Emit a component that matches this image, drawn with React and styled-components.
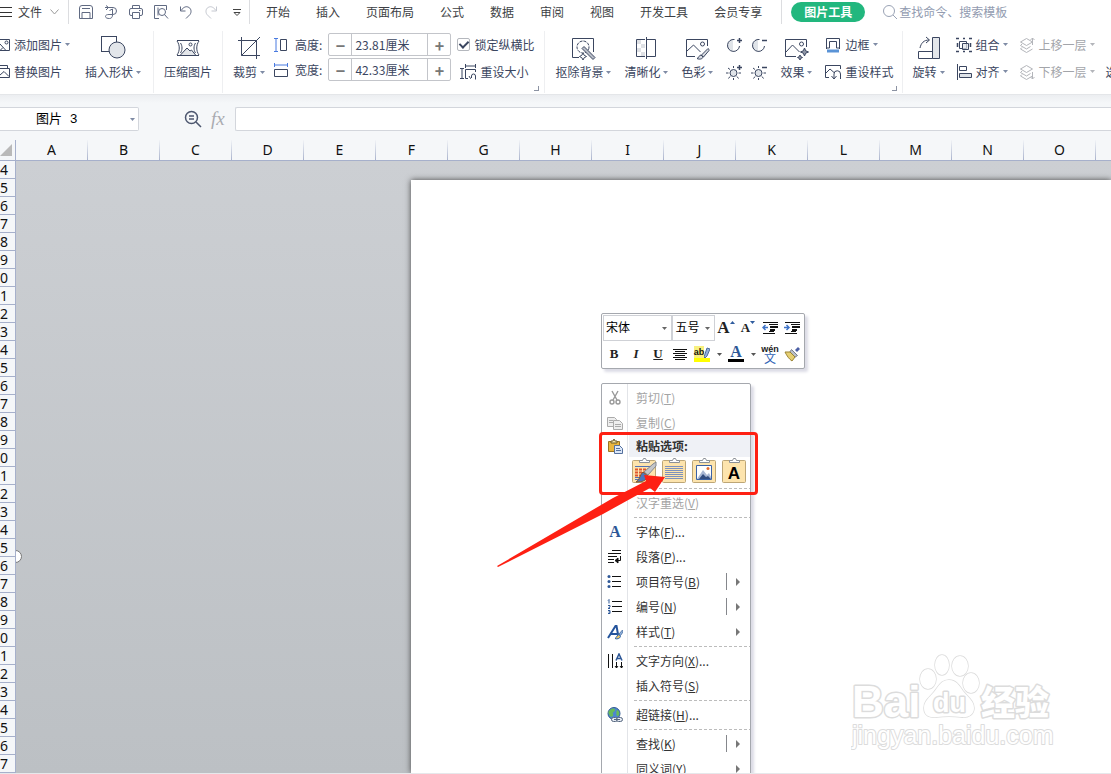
import React from "react";
import styled, { createGlobalStyle } from "styled-components";

const ink = "#3b4660";

const tabs = ["开始", "插入", "页面布局", "公式", "数据", "审阅", "视图", "开发工具", "会员专享"];
const columns = "ABCDEFGHIJKLMNO".split("");
const rows = Array.from({ length: 34 }, (_, i) => i + 24);

/* ---------- icons ---------- */

const Icon = ({ size = 16, w, h, color = ink, sw = 1, children }) => (
  <svg
    width={w || size}
    height={h || size}
    viewBox={`0 0 ${w || size} ${h || size}`}
    fill="none"
    stroke={color}
    strokeWidth={sw}
    aria-hidden="true"
  >
    {children}
  </svg>
);

const Caret = ({ color = "#7f8ba5" }) => (
  <svg width="5" height="3" viewBox="0 0 5 3" fill={color} aria-hidden="true">
    <path d="M0 0h5L2.500 3z" />
  </svg>
);

const LinesIcon = () => (
  <Icon w={12} h={12} color="#333"><path d="M0 1.500h12M0 6.500h12M0 10.500h12" /></Icon>
);
const ChevronIcon = () => (
  <Icon w={9} h={6} color="#9a9a9a"><path d="M.5.5l4 4.500 4-4.500" /></Icon>
);

const quick = [
  {
    name: "保存",
    icon: <Icon color="#606a82"><path d="M1.500 4a2.500 2.500 0 0 1 2.500-2.500h8A2.500 2.500 0 0 1 14.500 4v10.500h-13zM4 14V8.500h8V14M4 4.500h8" /></Icon>,
  },
  {
    name: "输出为PDF",
    icon: <Icon color="#606a82"><path d="M2 3.500h8a3.500 3.500 0 0 1 0 7H8M3 1.500l2.500 2L3 6M6.500 6.500l3-1.500v6c0 2-1 3.500-3 3.500s-4-.5-4-2 1.500-2 3.500-2h2.500" /></Icon>,
  },
  {
    name: "打印",
    icon: <Icon color="#606a82"><path d="M4.500 4.500v-3h7v3M4 11.500H3A1.500 1.500 0 0 1 1.500 10V6A1.500 1.500 0 0 1 3 4.500h10A1.500 1.500 0 0 1 14.500 6v4a1.500 1.500 0 0 1-1.500 1.500h-1M4.500 8.500h7v6h-7zM11 6.500h1.500" /></Icon>,
  },
  {
    name: "打印预览",
    icon: <Icon color="#606a82"><path d="M6 14.500H1.500v-13h12V6" /><circle cx="9" cy="8" r="3.500" /><path d="M5 3.500v8M11.500 10.500l3.500 4" /></Icon>,
  },
  {
    name: "撤销",
    icon: <Icon color="#606a82"><path d="M2.500 2.500v4.500h5M3 6.500c3-4 5.500-4.500 8-3s2.500 5 1 7L8 14.500" /></Icon>,
  },
  {
    name: "恢复",
    icon: <Icon color="#c5c8d0"><path d="M13.500 2.500v4.500h-5M13 6.500c-3-4-5.500-4.500-8-3s-2.500 5-1 7L8 14.500" /></Icon>,
  },
  {
    name: "自定义",
    icon: <Icon color="#444"><path d="M5 5.500h8M6 8.500l3 3 3-3z" /></Icon>,
  },
];

const AddPictureIcon = () => (
  <Icon w={10} h={14}><path d="M0 1.500h9.500v11H0M0 12.500l3-3M0 6l6 6.500" /><circle cx="6.500" cy="4.500" r="1.500" /></Icon>
);
const SwapPictureIcon = () => (
  <Icon w={10} h={15}><path d="M0 1.500h7.500V4M0 4.500h9.500v9H0M0 11l4-3.500 5 5" /></Icon>
);
const ShapesIcon = () => (
  <Icon size={26}><rect x="1.500" y="1.500" width="15" height="15" fill="#fff" /><circle cx="17" cy="15" r="8" fill="#e3e6ea" /></Icon>
);
const CompressIcon = () => (
  <Icon size={26}>
    <path d="M2 5.500h22M2 20.500h22M2 6c3 4 3 10 0 14M24 6c-3 4-3 10 0 14M5.500 8c2 3 2 7 0 10M20.500 8c-2 3-2 7 0 10" />
    <path d="M5 20.500l7-7.500 3 3 1.500-1 4.500 5.500z" fill="#e3e6ea" /><circle cx="15.500" cy="9.500" r="1.500" />
  </Icon>
);
const CropIcon = () => (
  <Icon size={26}><path d="M5.500 2v18.500H24M2 5.500h18.500V24M5.500 20.500L24 2" /></Icon>
);
const HeightIcon = () => (
  <Icon><path d="M1 1.500h4M1 14.500h4M3 1.500v13" stroke="#4a7be0" /><path d="M7.500 2.500h6v11h-6z" /></Icon>
);
const WidthIcon = () => (
  <Icon><path d="M1.500 1v4M14.500 1v4M1.500 3h13" stroke="#4a7be0" /><path d="M1.500 7.500h13v7h-13z" /></Icon>
);
const ResetSizeIcon = () => (
  <Icon><path d="M0 4.500h4M0 14.500h4M2 4.500v10M5.500 0v4M15.500 0v4M5.500 2h10M8 14.500H5.500v-9h10V8M9 12l1.500 2.500L12 13M11.500 13.500V12a2 2 0 0 1 4 0v3.500" /></Icon>
);
const CutoutIcon = () => (
  <Icon size={26}>
    <path d="M9 22.500H2.500v-19h21V17" /><circle cx="13" cy="12" r="6" strokeDasharray="3 1" />
    <path d="M12 13.500l2-2L25 22.500l-2 2z" fill="#b9bec8" /><path d="M13 18l1.200 2.300 2.300 1.200-2.300 1.200L13 25l-1.200-2.300-2.300-1.200 2.300-1.200z" fill="#fff" />
  </Icon>
);
const ClarityIcon = () => (
  <Icon size={26}>
    <path d="M12 4.500H3.500v17H12M14 4.500h8.500v17H14" /><path d="M13.500 2v22" />
    <path d="M4 5h4v4H4zM8 9h4v4H8zM4 13h4v4H4zM8 17h4v4H8z" fill="#dfe1e5" stroke="none" />
  </Icon>
);
const ColorIcon = () => (
  <Icon size={26}>
    <path d="M11 21.500H2.500v-17h21V11M3 16l6.500-6 7 7" /><circle cx="18.500" cy="9" r="2" />
    <path d="M24 13.500L17.500 20l2 2L25 15.500c0-1-.5-2-1-2zM17 20c-2 0-2 3-4 3.500 3 1.500 6 0 6-1.500z" fill="#d9dce2" />
  </Icon>
);
const EffectIcon = () => (
  <Icon size={26}>
    <path d="M13 21.500H2.500v-17h21V12M3 17l6.500-7 7 7" /><circle cx="18.500" cy="9" r="2" />
    <path d="M21.500 13l1.200 2.800 2.800 1.200-2.800 1.200-1.200 2.800-1.200-2.800-2.800-1.200 2.800-1.200zM17 20l.8 1.700 1.700.8-1.700.8L17 25l-.8-1.700-1.700-.8 1.700-.8z" fill="#8f96a6" />
  </Icon>
);
const RotateIcon = () => (
  <Icon size={26}>
    <path d="M2.500 16.500h14v7h-14zM4 13c1-5 4-8 9-8M10 2l3.500 3L10 8" /><path d="M16.500 2.500h7v21h-7z" fill="#e3e6ea" />
  </Icon>
);
const ContrastIcon = ({ plus }) => (
  <Icon>
    <path d="M7 2.500a6 6 0 0 0 0 12z" fill="#dfe3e8" stroke="none" />
    <path d="M8.500 2.500A6 6 0 1 0 13.500 9" /><path d={plus ? "M11 3.500h5M13.500 1v5" : "M11 3.500h5"} strokeWidth="1.500" />
  </Icon>
);
const SunIcon = ({ plus }) => (
  <Icon>
    <circle cx="7.500" cy="9" r="3.500" fill="#dfe3e8" />
    <path d="M7.500 2v2M7.500 14v2M0 9h2.500M12.500 9H15M2 4l2 1.500M2.500 14.500L4 12.500M12.500 14.500L11 12.500" />
    <path d={plus ? "M11 3.500h5M13.500 1v5" : "M11 3.500h5"} strokeWidth="1.500" />
  </Icon>
);
const BorderIcon = () => (
  <Icon><path d="M1.500 12V1.500h13V12M4.500 11V4.500h7V11M1.500 11h3M11.500 11h3" /><path d="M2 14h12" stroke="#5a93d6" strokeWidth="3" /></Icon>
);
const ResetStyleIcon = () => (
  <Icon><path d="M4 13.500H.5v-12h15V5M1 9l4-4 4 3.500M6.500 12L9 15l2.500-3M9 15v-5a3 3 0 0 1 6.500 0v5" /></Icon>
);
const GroupIcon = () => (
  <Icon><path d="M3.500 4.500h7v7h-7z" /><path d="M6.500 6.500h6v6h-6z" fill="#dfe3e8" fillOpacity=".7" /><path d="M0 1.500h3M13 1.500h3M0 14.500h3M13 14.500h3M7 1.500h2M7 14.500h2M1.500 6v4M14.500 6v4" strokeWidth="1.500" /></Icon>
);
const AlignIcon = () => (
  <Icon><path d="M1.500 0v16" /><path d="M3.500 2.500h7v4h-7z" /><path d="M3.500 9.500h12v4h-12z" fill="#dfe3e8" /></Icon>
);
const LayerIcon = ({ up }) => (
  <Icon color="#b3b5ba">
    <path d="M7.500 1.500l6 3.500-6 3.500L1.500 5zM3 7l-1.500 1.500 6 3.500 4-2.500M3 10.500L1.500 12l6 3.500 6-3.500" />
    {up ? <path d="M13.500 8V1M11.500 3l2-2 2 2" /> : <path d="M13.500 8v7M11.500 13l2 2 2-2" />}
  </Icon>
);

/* ---------- ribbon pieces ---------- */

const Big = ({ icon, label, caret }) => (
  <BigButton>
    {icon}
    <Caption>{label}{caret && <Caret />}</Caption>
  </BigButton>
);

const Small = ({ icon, label, caret, muted }) => (
  <SmallButton $muted={muted} disabled={muted}>
    {icon}
    <Caption>{label}{caret && <Caret color={muted ? "#b3b5ba" : undefined} />}</Caption>
  </SmallButton>
);

const SizeField = ({ id, value }) => (
  <Spinner>
    <StepButton aria-label="减少">−</StepButton>
    <SpinnerInput id={id} defaultValue={value} />
    <StepButton aria-label="增加">+</StepButton>
  </Spinner>
);

const Ribbon = () => (
  <RibbonBar>
    <Group $gap={15} $left={0} $right={12}>
      <Stack>
        <Small icon={<AddPictureIcon />} label="添加图片" caret />
        <Small icon={<SwapPictureIcon />} label="替换图片" />
      </Stack>
      <Big icon={<ShapesIcon />} label="插入形状" caret />
    </Group>
    <Group><Big icon={<CompressIcon />} label="压缩图片" /></Group>
    <Group $gap={6}>
      <Big icon={<CropIcon />} label="裁剪" caret />
      <Fields>
        <FieldLabel htmlFor="pic-height"><HeightIcon />高度:</FieldLabel>
        <SizeField id="pic-height" value="23.81厘米" />
        <FieldLabel htmlFor="pic-width"><WidthIcon />宽度:</FieldLabel>
        <SizeField id="pic-width" value="42.33厘米" />
      </Fields>
      <Stack>
        <CheckLabel><CheckBox type="checkbox" defaultChecked />锁定纵横比</CheckLabel>
        <Indent><Small icon={<ResetSizeIcon />} label="重设大小" /></Indent>
      </Stack>
      <Launcher />
    </Group>
    <Group $gap={13} $right={8}>
      <Big icon={<CutoutIcon />} label="抠除背景" caret />
      <Big icon={<ClarityIcon />} label="清晰化" caret />
      <Big icon={<ColorIcon />} label="色彩" caret />
      <Tuning>
        <SmallButton aria-label="增加对比度"><ContrastIcon plus /></SmallButton>
        <SmallButton aria-label="降低对比度"><ContrastIcon /></SmallButton>
        <SmallButton aria-label="增加亮度"><SunIcon plus /></SmallButton>
        <SmallButton aria-label="降低亮度"><SunIcon /></SmallButton>
      </Tuning>
      <Big icon={<EffectIcon />} label="效果" caret />
      <Stack>
        <Small icon={<BorderIcon />} label="边框" caret />
        <Small icon={<ResetStyleIcon />} label="重设样式" />
      </Stack>
      <Launcher />
    </Group>
    <Group $gap={11} $last>
      <Big icon={<RotateIcon />} label="旋转" caret />
      <Stack>
        <Small icon={<GroupIcon />} label="组合" caret />
        <Small icon={<AlignIcon />} label="对齐" caret />
      </Stack>
      <Stack>
        <Small icon={<LayerIcon up />} label="上移一层" caret muted />
        <Small icon={<LayerIcon />} label="下移一层" caret muted />
      </Stack>
      <Stack $end><Small label="选择" /></Stack>
    </Group>
  </RibbonBar>
);

/* ---------- floating format toolbar ---------- */

const DentIcon = ({ left }) => (
  <Icon color="#111">
    <path d="M1 2.500h15M1 13.500h12M7 4.500h9M7 11.500h5" />
    <path d="M8 7h8M8 10h5" strokeWidth="2" />
    <path d={left ? "M6 7.500H1M3.500 5L1 7.500 3.500 10" : "M0 7.500h5M2.500 5L5 7.500 2.500 10"} stroke="#3f74c8" strokeWidth="1.500" />
  </Icon>
);

const FormatBar = () => (
  <Floating>
    <FormatRow>
      <Combo $w={70}>
        <ComboSelect aria-label="字体"><option>宋体</option></ComboSelect>
        <ComboArrow><Caret color="#666" /></ComboArrow>
      </Combo>
      <Combo $w={43}>
        <ComboSelect aria-label="字号"><option>五号</option></ComboSelect>
        <ComboArrow><Caret color="#666" /></ComboArrow>
      </Combo>
      <Tool aria-label="增大字号">
        <Glyph $size={17}>A</Glyph><Icon w={5} h={14} color="none"><path d="M0 3h5L2.500 0z" fill="#2f5c9e" /></Icon>
      </Tool>
      <Tool aria-label="减小字号">
        <Glyph $size={13}>A</Glyph><Icon w={5} h={14} color="none"><path d="M0 0h5L2.500 3z" fill="#2f5c9e" /></Icon>
      </Tool>
      <Tool aria-label="减少缩进"><DentIcon left /></Tool>
      <Tool aria-label="增加缩进"><DentIcon /></Tool>
    </FormatRow>
    <FormatRow>
      <Tool aria-label="加粗"><Glyph $size={13}>B</Glyph></Tool>
      <Tool aria-label="倾斜"><Glyph $size={13} $italic>I</Glyph></Tool>
      <Tool aria-label="下划线"><Glyph $size={13} $underline>U</Glyph></Tool>
      <Tool aria-label="居中"><Icon color="#111"><path d="M1 3.500h14M3 5.500h10M1 7.500h14M3 9.500h10M1 11.500h14M3 13.500h10" /></Icon></Tool>
      <Tool aria-label="突出显示">
        <Marker>
          <span>ab</span>
          <Icon w={6} h={11}><path d="M0 10l3-9 3 1-3 7-2 2z" fill="#8fb0de" stroke="#4e6d9c" /></Icon>
        </Marker>
      </Tool>
      <DropTool aria-label="突出显示颜色"><Caret color="#555" /></DropTool>
      <Tool aria-label="字体颜色"><FontColor>A</FontColor></Tool>
      <DropTool aria-label="更多颜色"><Caret color="#555" /></DropTool>
      <Tool aria-label="拼音指南"><Pinyin><span>wén</span><span>文</span></Pinyin></Tool>
      <Tool aria-label="格式刷">
        <Icon color="none">
          <path d="M11 4l3-3 2 2-3 3z" fill="#4b5fa5" /><path d="M7.500 3.500l6 6-3 2-5-5z" fill="#b9bec8" stroke="#7a7f8c" />
          <path d="M1 6l5 0 5 5-3 4C5 13 3 10 1 6z" fill="#e6cf73" stroke="#9b8433" />
        </Icon>
      </Tool>
    </FormatRow>
  </Floating>
);

/* ---------- context menu ---------- */

const CutIcon = () => (
  <Icon color="#999" sw={1.4}><path d="M5 1l5 9M11 1L6 10" /><circle cx="5" cy="12" r="2" /><circle cx="11" cy="12" r="2" /></Icon>
);
const CopyIcon = () => (
  <Icon color="#aaa"><path d="M.5 2.500h7l2 2v7h-9z" fill="#eee" /><path d="M6.500 5.500h6l3 3v6h-9z" fill="#eee" /><path d="M2 5.500h4M2 7.500h4M8 9.500h6M8 11.500h6" /></Icon>
);
const PasteIcon = () => (
  <Icon color="none">
    <path d="M1.500 3.500h11v10h-11z" fill="#e9b63f" stroke="#9b7422" /><path d="M4 5V3h2l1-2 1 2h2v2z" fill="#f6e7a8" stroke="#6d5a27" />
    <path d="M7.500 7.500h5l3 3v5h-8z" fill="#dce7f8" stroke="#55719e" /><path d="M9 10.500h4M9 12.500h5" stroke="#55719e" />
  </Icon>
);
const ParagraphIcon = () => (
  <Icon color="#111"><path d="M5 1.500h9M1 4.500h13M1 7.500h9M1 10.500h6M1 13.500h6M13.500 7v4.500H10" /><path d="M8 11.500l3-2.500v5z" fill="#111" /></Icon>
);
const BulletIcon = () => (
  <Icon color="#111"><path d="M5 2.500h9M5 7.500h9M5 12.500h9" /><g fill="#2d5797" stroke="none"><circle cx="2" cy="2.500" r="1.500" /><circle cx="2" cy="7.500" r="1.500" /><circle cx="2" cy="12.500" r="1.500" /></g></Icon>
);
const NumberIcon = () => (
  <Icon color="#111">
    <path d="M5 2.500h10M5 7.500h10M5 12.500h10" />
    <path d="M1 1.500l1-1v4M1 6.500h2v1.500l-2 1.500h2M1 11.500h2v3H1M1.500 13h1.500" stroke="#2d5797" />
  </Icon>
);
const StyleIcon = () => (
  <Icon color="none">
    <path d="M1 14L8.500 2h1l2 11M4 10h6" stroke="#24549c" strokeWidth="2" />
    <path d="M15.500 6L12 10l1.500 1.500L16 8z" fill="#8fb1dc" stroke="#5d7fae" /><path d="M12 10.500c-2 0-2 3-4 4 2 1 5 0 5.500-2z" fill="#e8c468" stroke="#2d66b0" />
  </Icon>
);
const DirectionIcon = () => (
  <Icon color="#111"><path d="M1.500 1v14M5.500 1v14M9.500 9v6M14.500 9v6M8 13l1.500 2 1.500-2M13 13l1.500 2 1.500-2" /><path d="M9 7.500L12 1l3 6.500M10 5.500h4" stroke="#2d5797" strokeWidth="1.500" /></Icon>
);
const LinkIcon = () => (
  <Icon color="none">
    <circle cx="7" cy="6.500" r="6" fill="#4d86cf" stroke="#315a94" /><path d="M3 3c2-2 5-2 5 0s-3 2-2 4-2 4-3 2-3-4 0-6zM10 3c3 1 3 5 1 6s-2-4-1-6z" fill="#68bb58" />
    <rect x="4.500" y="10.500" width="6" height="4" rx="2" stroke="#55667f" fill="#e6ebf3" /><rect x="9.500" y="10.500" width="6" height="4" rx="2" stroke="#55667f" fill="#e6ebf3" /><path d="M7 12.500h6" stroke="#55667f" />
  </Icon>
);

const Clipboard = ({ children }) => (
  <Icon w={26} h={28} color="none">
    <rect x="1.500" y="3.500" width="23" height="22" rx="1" fill="#fde4ad" stroke="#bda676" />
    <path d="M8.500 5.500v-2h3l1-2h2l1 2h3v2z" fill="#fff" stroke="#8b9097" />
    {children}
  </Icon>
);

const pasteChoices = [
  {
    name: "保留源格式",
    art: (
      <>
        <path d="M4 9.500h18M4 20.500h17M4 22.500h10" stroke="#5272b5" /><path d="M4 12.500h16M4 15.500h14M4 18.500h12" stroke="#e0552b" strokeWidth="2" strokeDasharray="3 1" />
        <path d="M25 5v4l-8 9-4-3L22 7z" fill="#c4c6c9" stroke="#85888e" /><path d="M12 15l5 4c-2 5-6 6-12 6 4-2 4-8 7-10z" fill="#4b77bd" stroke="#85592c" />
      </>
    ),
  },
  { name: "匹配目标格式", art: <path d="M4 9.500h18M4 11.500h18M4 13.500h18M4 15.500h18M4 17.500h18M4 19.500h18M4 21.500h18" stroke="#7d92be" /> },
  {
    name: "图片",
    art: (
      <>
        <path d="M5.500 8.500h15v14h-15z" fill="#fff" stroke="#3b62a5" /><path d="M6 22l6-9 4 5 2-2 2 4v2z" fill="#a9b8d4" /><path d="M8 22l4-5 3 3 2-1 3 3z" fill="#324d80" /><circle cx="17" cy="11.500" r="1.500" fill="#e56a2c" />
      </>
    ),
  },
  { name: "只保留文本" },
];

const menuItems = [
  { text: "汉字重选", key: "V", disabled: true },
  "-",
  { text: "字体", key: "F", more: true, glyph: true },
  { text: "段落", key: "P", more: true, icon: <ParagraphIcon /> },
  { text: "项目符号", key: "B", icon: <BulletIcon />, split: true, sub: true },
  { text: "编号", key: "N", icon: <NumberIcon />, split: true, sub: true },
  { text: "样式", key: "T", icon: <StyleIcon />, sub: true },
  "-",
  { text: "文字方向", key: "X", more: true, icon: <DirectionIcon /> },
  { text: "插入符号", key: "S" },
  "-",
  { text: "超链接", key: "H", more: true, icon: <LinkIcon /> },
  "-",
  { text: "查找", key: "K", split: true, sub: true },
  { text: "同义词", key: "Y", sub: true },
];

const Item = ({ item }) => (
  <MenuItem role="menuitem" disabled={item.disabled}>
    <Gutter>{item.glyph ? <Glyph $size={16} $blue>A</Glyph> : item.icon}</Gutter>
    <ItemText>{item.text}(<u>{item.key}</u>){item.more && "..."}</ItemText>
    {item.split && <SplitLine />}
    {item.sub && (
      <Icon w={4} h={8} color="none"><path d="M0 0v8l4-4z" fill="#777" /></Icon>
    )}
  </MenuItem>
);

const ContextMenu = () => (
  <MenuPanel role="menu">
    <Item item={{ text: "剪切", key: "T", disabled: true, icon: <CutIcon /> }} />
    <Item item={{ text: "复制", key: "C", disabled: true, icon: <CopyIcon /> }} />
    <PasteTitle><Gutter><PasteIcon /></Gutter><span>粘贴选项:</span></PasteTitle>
    <PasteRow>
      {pasteChoices.map(({ name, art }) => (
        <PasteButton key={name} aria-label={name}>
          <Clipboard>
            {art || <text x="13" y="22" textAnchor="middle" fontFamily="Liberation Sans" fontWeight="bold" fontSize="17" fill="#000">A</text>}
          </Clipboard>
        </PasteButton>
      ))}
    </PasteRow>
    <Separator />
    {menuItems.map((item, i) => (item === "-" ? <Separator key={i} /> : <Item key={item.text} item={item} />))}
  </MenuPanel>
);

const Watermark = () => (
  <WatermarkSvg width="206" height="100" viewBox="0 0 206 100" aria-hidden="true">
    <g fill="#fff" stroke="#dcdcdc" strokeWidth="3" paintOrder="stroke" strokeLinejoin="round" fontFamily="Liberation Sans, sans-serif">
      <text x="1" y="64" fontSize="44" fontWeight="bold">Bai</text>
      <g strokeWidth="1.500">
        <ellipse cx="77" cy="26" rx="8" ry="10" />
        <ellipse cx="91" cy="12" rx="7" ry="10" />
        <ellipse cx="109" cy="13" rx="8" ry="10" />
        <ellipse cx="120" cy="30" rx="8" ry="10" />
        <path d="M98 27c-8 0-10 6-15 12s-10 9-10 16c0 8 6 10 13 9 8-1 16-1 24 0 8 1 13-3 13-9 0-7-6-11-11-17-4-6-7-11-14-11z" />
      </g>
      <text x="82" y="59" fontSize="27" fontWeight="bold">du</text>
      <text x="130" y="62" fontSize="34" fontWeight="900" fontFamily="Noto Sans CJK SC, sans-serif">经验</text>
      <text x="1" y="91" fontSize="25" strokeWidth="2">jingyan.baidu.com</text>
    </g>
  </WatermarkSvg>
);

const App = () => {
  return (
    <Shell>
      <GlobalStyle />
      <MenuBar>
        <FileButton><LinesIcon />文件<ChevronIcon /></FileButton>
        <QuickTools>
          {quick.map(({ name, icon }) => <QuickButton key={name} aria-label={name}>{icon}</QuickButton>)}
        </QuickTools>
        <Tabs>
          {tabs.map((tab) => <Tab key={tab}>{tab}</Tab>)}
        </Tabs>
        <ActiveTab>图片工具</ActiveTab>
        <Search>
          <Icon color="#9aa3b5"><circle cx="7" cy="7" r="5.500" /><path d="M11 11l4 4" /></Icon>
          <SearchInput aria-label="搜索" placeholder="查找命令、搜索模板" />
        </Search>
      </MenuBar>

      <Ribbon />

      <FormulaRow>
        <NameBox>
          <NameInput aria-label="名称框" defaultValue="图片 3" />
          <NameArrow aria-label="名称列表"><Caret /></NameArrow>
        </NameBox>
        <FormulaTools>
          <Icon w={18} h={18} sw={1.5} color="#4c566e"><circle cx="7.500" cy="7.500" r="6" /><path d="M12 12l5 5M5 6h5M5 9h5" /></Icon>
          <Fx>fx</Fx>
        </FormulaTools>
        <FormulaInput aria-label="编辑栏" />
      </FormulaRow>

      <ColumnHeads>
        <Corner><Icon w={12} h={12} color="none"><path d="M12 0v12H0z" fill="#b9b9b9" /></Icon></Corner>
        {columns.map((name) => <ColumnHead key={name}>{name}</ColumnHead>)}
      </ColumnHeads>

      <Workspace>
        <RowHeads>
          {rows.map((n) => <RowHead key={n}>{n % 10}</RowHead>)}
        </RowHeads>
        <Sheet>
          <Page />
          <ResizeKnob />
          <Watermark />
          <FormatBar />
          <ContextMenu />
          <Highlight />
          <Pointer width="170" height="94" viewBox="0 0 170 94" aria-hidden="true">
            <path d="M0 92L116 24 149 7 147 1 168 3 158 18 153 14 106 40 1 93z" fill="#fe2013" />
          </Pointer>
        </Sheet>
      </Workspace>
      <BottomEdge />
    </Shell>
  );
};

export default App;

const GlobalStyle = createGlobalStyle`
  * {
    box-sizing: border-box;
  }

  body {
    margin: 0;
    overflow: hidden;
    font: 12px/16px "Noto Sans CJK SC", sans-serif;
    color: #3b4660;
  }

  button, input, select {
    margin: 0;
    padding: 0;
    border: 0;
    background: none;
    font: inherit;
    color: inherit;
  }

  svg {
    display: block;
    flex-shrink: 0;
  }
`;

const Shell = styled.div`
  display: flex;
  flex-direction: column;
  height: 100vh;
  background: #f5f7f9;
`;

const MenuBar = styled.header`
  display: flex;
  align-items: center;
  height: 24px;
  background: #fff;
  color: #3d3f45;
  white-space: nowrap;
`;

const FileButton = styled.button`
  display: flex;
  align-items: center;
  gap: 6px;
  width: 69px;
  height: 24px;
  border-right: 1px solid #dcdde0;

  svg:last-child {
    margin-left: 2px;
  }
`;

const QuickTools = styled.div`
  display: flex;
  padding: 0 1px 0 4px;
  border-right: 1px solid #dcdde0;
`;

const QuickButton = styled.button`
  display: flex;
  align-items: center;
  justify-content: center;
  width: 25px;
  height: 24px;
`;

const Tabs = styled.nav`
  display: flex;
  margin: 0 9px 0 3px;
  padding-right: 6px;
  border-right: 1px solid #dcdde0;
`;

const Tab = styled.button`
  flex-shrink: 0;
  height: 24px;
  padding: 0 13px;
`;

const ActiveTab = styled(Tab)`
  height: 20px;
  border-radius: 10px;
  background: #22b77e;
  color: #fff;
  font-weight: bold;
`;

const Search = styled.label`
  display: flex;
  flex: 1;
  align-items: center;
  gap: 1px;
  margin-left: 17px;
  min-width: 0;
`;

const SearchInput = styled.input`
  flex: 1;
  min-width: 0;

  &::placeholder {
    color: #929bb0;
    opacity: 1;
  }
`;

const RibbonBar = styled.section`
  position: relative;
  display: flex;
  height: 71px;
  padding-top: 7px;
  overflow: hidden;
  background: #fff;
  border-bottom: 1px solid #e4e6e9;
  white-space: nowrap;
`;

const Group = styled.div`
  position: relative;
  display: flex;
  flex-shrink: 0;
  gap: ${({ $gap }) => $gap || 0}px;
  height: 62px;
  padding: 0 ${({ $right = 10 }) => $right}px 0 ${({ $left = 10 }) => $left}px;
  border-right: ${({ $last }) => ($last ? 0 : 1)}px solid #eeeff1;
`;

const Stack = styled.div`
  display: flex;
  flex-direction: column;
  justify-content: ${({ $end }) => ($end ? "flex-end" : "flex-start")};
  height: 54px;
`;

const BigButton = styled.button`
  display: flex;
  flex-direction: column;
  align-items: center;
  gap: 3px;
  padding-top: 4px;
`;

const Caption = styled.span`
  display: flex;
  align-items: center;
  gap: 3px;
`;

const SmallButton = styled.button`
  display: flex;
  align-items: center;
  gap: 4px;
  height: 27px;
  color: ${({ $muted }) => ($muted ? "#a3a5aa" : "inherit")};
`;

const Tuning = styled.div`
  display: grid;
  grid-template-columns: 16px 16px;
  column-gap: 9px;
  height: 54px;
`;

const Fields = styled.div`
  display: grid;
  grid-template-columns: auto 123px;
  grid-auto-rows: 23px;
  gap: 2px 6px;
  padding: 2px 0 0 2px;
`;

const FieldLabel = styled.label`
  display: flex;
  align-items: center;
  gap: 6px;
`;

const Spinner = styled.div`
  display: flex;
  border: 1px solid #c3c5ca;
  border-radius: 2px;
`;

const SpinnerInput = styled.input`
  flex: 1;
  min-width: 0;
  padding-left: 3px;
  border: solid #c3c5ca;
  border-width: 0 1px;
`;

const StepButton = styled.button`
  width: 22px;
  color: #777;
  font-size: 16px;
  font-weight: bold;
`;

const CheckLabel = styled.label`
  display: flex;
  align-items: center;
  gap: 4px;
  height: 27px;
`;

const CheckBox = styled.input`
  appearance: none;
  width: 13px;
  height: 13px;
  border: 1px solid #b4b7bd;
  border-radius: 2px;

  &:checked::after {
    content: "";
    display: block;
    width: 4px;
    height: 7px;
    margin: 0 auto;
    border: solid ${ink};
    border-width: 0 2px 2px 0;
    transform: rotate(45deg);
  }
`;

const Indent = styled.div`
  padding-left: 3px;
`;

const Launcher = styled.span`
  position: absolute;
  right: 5px;
  bottom: 2px;
  width: 5px;
  height: 5px;
  border: solid #8c93a3;
  border-width: 0 1px 1px 0;
`;

const FormulaRow = styled.div`
  display: flex;
  align-items: center;
  height: 45px;
  padding-top: 3px;
  background: linear-gradient(#eceef1, #f5f7f9 8px);
`;

const NameBox = styled.div`
  display: flex;
  width: 139px;
  height: 24px;
  border: 1px solid #d3d6dc;
  border-left: 0;
  border-radius: 0 2px 2px 0;
  background: #fff;
`;

const NameInput = styled.input`
  flex: 1;
  min-width: 0;
  padding: 2px 0 0 36px;
  color: #000;
  font: 13px/16px "Liberation Mono", "Noto Sans CJK SC", monospace;
`;

const NameArrow = styled.button`
  display: flex;
  align-items: center;
  justify-content: center;
  width: 11px;
`;

const FormulaTools = styled.div`
  display: flex;
  align-items: center;
  gap: 9px;
  width: 96px;
  padding-left: 45px;
`;

const Fx = styled.span`
  color: #a9abb0;
  font: italic 19px/20px "Liberation Serif", serif;
`;

const FormulaInput = styled.input`
  flex: 1;
  height: 24px;
  border: 1px solid #d3d6dc;
  border-right: 0;
  border-radius: 2px 0 0 2px;
  background: #fff;
`;

const ColumnHeads = styled.div`
  display: flex;
  height: 21px;
  overflow: hidden;
  border-bottom: 1px solid #a6b0cb;
  color: #111;
  font: 14px/20px "Noto Sans", sans-serif;
`;

const Corner = styled.div`
  display: flex;
  flex-shrink: 0;
  align-items: center;
  width: 16px;
  border-right: 1px solid #a6b0cb;
`;

const ColumnHead = styled.div`
  flex: 0 0 72px;
  border-right: 1px solid;
  border-image: linear-gradient(#f5f7f9, #a6b0cb) 1;
  text-align: center;
`;

const Workspace = styled.main`
  display: flex;
  flex: 1;
  min-height: 0;
  overflow: hidden;
`;

const RowHeads = styled.div`
  flex-shrink: 0;
  width: 16px;
  border-right: 1px solid #a6b0cb;
  color: #111;
  font: 14px/17px "Noto Sans", sans-serif;
`;

const RowHead = styled.div`
  height: 18px;
  border-bottom: 1px solid #a6b0cb;
`;

const Sheet = styled.div`
  position: relative;
  display: flex;
  flex: 1;
  min-width: 0;
  padding: 19px 0 0 395px;
  overflow: hidden;
  background: linear-gradient(#cccfd3, #bcc0c4);
`;

const Page = styled.div`
  flex: 1;
  background: #fff;
  box-shadow: 0 0 6px #444;
`;

const ResizeKnob = styled.span`
  position: absolute;
  top: 389px;
  left: -7px;
  width: 13px;
  height: 13px;
  border: 1px solid #777;
  border-radius: 50%;
  background: #fff;
`;

const Floating = styled.div`
  position: absolute;
  top: 152px;
  left: 585px;
  width: 204px;
  padding: 1px;
  border: 1px solid #a5a8ae;
  border-radius: 2px;
  background: #fff;
  box-shadow: 3px 3px 3px #dcdce6;
`;

const FormatRow = styled.div`
  display: flex;
  align-items: center;
  height: 26px;
`;

const Combo = styled.div`
  position: relative;
  width: ${({ $w }) => $w}px;
  height: 26px;
  border: 1px solid #cfd1d6;
  color: #000;
`;

const ComboSelect = styled.select`
  appearance: none;
  width: 100%;
  height: 22px;
  padding-left: 2px;
`;

const ComboArrow = styled.span`
  position: absolute;
  top: 11px;
  right: 4px;
  pointer-events: none;
`;

const Tool = styled.button`
  display: flex;
  align-items: center;
  justify-content: center;
  flex: 0 0 22px;
  height: 24px;
`;

const DropTool = styled(Tool)`
  flex-basis: 12px;
`;

const Glyph = styled.span`
  color: ${({ $blue }) => ($blue ? "#2d5797" : "#222")};
  font: ${({ $italic }) => ($italic ? "italic" : "normal")} bold ${({ $size }) => $size}px/18px "Liberation Serif", serif;
  text-decoration: ${({ $underline }) => ($underline ? "underline" : "none")};
`;

const Marker = styled.span`
  display: flex;
  align-items: center;
  height: 16px;
  border-bottom: 4px solid #ffff00;
  color: #111;
  font: bold 9px/12px "Liberation Sans", sans-serif;

  span {
    background: #f8f07e;
  }
`;

const FontColor = styled.span`
  width: 16px;
  height: 16px;
  border-bottom: 3px solid #000;
  color: #2d5797;
  font: bold 16px/12px "Liberation Serif", serif;
`;

const Pinyin = styled.span`
  display: flex;
  flex-direction: column;
  color: #222;
  font: bold 9px/8px "Liberation Sans", sans-serif;

  span + span {
    color: #2f62b5;
    font: 12px/10px "Noto Sans CJK SC", sans-serif;
  }
`;

const MenuPanel = styled.div`
  position: absolute;
  top: 222px;
  left: 585px;
  width: 150px;
  padding-top: 1px;
  border: 1px solid #a5a8ae;
  border-radius: 2px;
  background: linear-gradient(#e2e4e8, #e2e4e8) 25px 0 / 1px 100% no-repeat #fff;
  box-shadow: 3px 3px 3px #dcdce6;
  color: #333;
`;

const MenuItem = styled.button`
  display: flex;
  align-items: center;
  width: 100%;
  height: 25px;
  padding-right: 10px;
  text-align: left;

  &:disabled {
    color: #a4a4a4;
  }
`;

const Gutter = styled.span`
  display: flex;
  justify-content: center;
  flex: 0 0 26px;
`;

const ItemText = styled.span`
  flex: 1;
  padding-left: 8px;
`;

const SplitLine = styled.span`
  width: 1px;
  height: 17px;
  margin-right: 9px;
  background: #85878c;
`;

const PasteTitle = styled.div`
  display: flex;
  align-items: center;
  height: 22px;
  background: linear-gradient(#eff1f6, #eff1f6) 27px 0 no-repeat;
  font-weight: bold;

  span + span {
    padding-left: 8px;
  }
`;

const PasteRow = styled.div`
  display: flex;
  gap: 4px;
  height: 29px;
  padding-left: 29px;
`;

const PasteButton = styled.button`
  width: 26px;
  height: 28px;
`;

const Separator = styled.div`
  height: 4px;
  margin: 0 0 0 32px;
  background: repeating-linear-gradient(90deg, #bcbcbc 0 3px, transparent 3px 5px) 0 2px / 100% 1px no-repeat;
`;

const Highlight = styled.div`
  position: absolute;
  top: 271px;
  left: 583px;
  width: 159px;
  height: 63px;
  border: 3px solid #fe2013;
  border-radius: 4px;
`;

const Pointer = styled.svg`
  position: absolute;
  top: 313px;
  left: 481px;
`;

const WatermarkSvg = styled.svg`
  position: absolute;
  top: 492px;
  left: 835px;
`;

const BottomEdge = styled.footer`
  height: 1px;
  background: #e6e8eb;
`;
